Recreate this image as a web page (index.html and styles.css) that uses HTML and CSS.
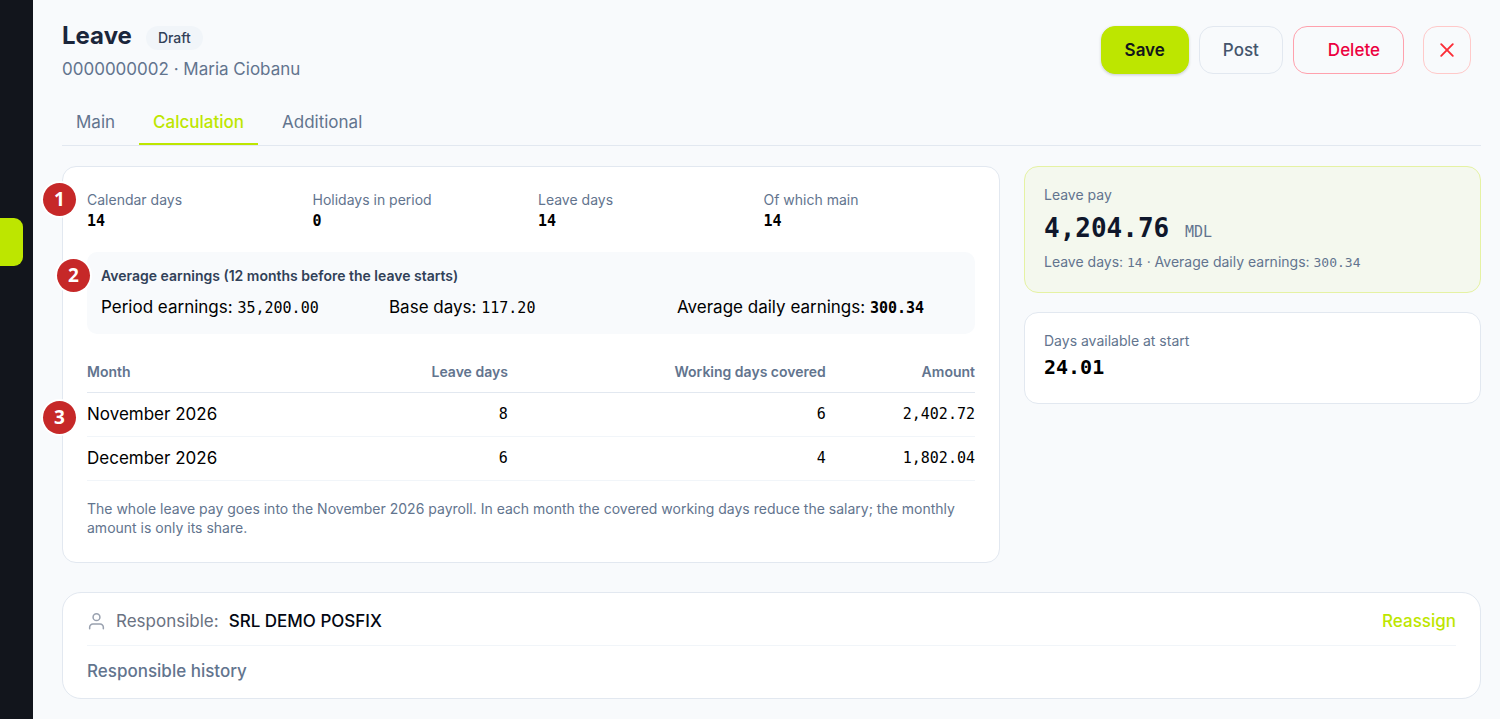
FILE: index.html
```html
<!DOCTYPE html>
<html lang="en">
<head>
<meta charset="utf-8">
<title>Leave</title>
<link rel="stylesheet" href="styles.css">
</head>
<body>
<div class="app">
  <aside class="sidebar"><a class="sidebar-active" href="#" aria-label="Leave"></a></aside>
  <main class="main">
    <header class="header">
      <div class="heading">
        <div class="title-row">
          <h1 class="title">Leave</h1>
          <span class="status">Draft</span>
        </div>
        <p class="subtitle">0000000002 · Maria Ciobanu</p>
      </div>
      <div class="actions">
        <button class="btn btn-save" type="button">Save</button>
        <button class="btn" type="button">Post</button>
        <button class="btn btn-delete" type="button">Delete</button>
        <button class="btn btn-close" type="button" aria-label="Close">
          <svg width="20" height="20" viewBox="0 0 20 20" fill="none" stroke="currentColor" stroke-width="1.9" stroke-linecap="round"><path d="M4.2 4.2l11.6 11.6M15.8 4.2L4.2 15.8"/></svg>
        </button>
      </div>
    </header>

    <nav class="tabs">
      <a class="tab" href="#">Main</a>
      <a class="tab tab-active" href="#">Calculation</a>
      <a class="tab" href="#">Additional</a>
    </nav>

    <div class="columns">
      <section class="card calc">
        <dl class="stats">
          <div class="stat"><span class="marker marker-outer">1</span><dt class="label">Calendar days</dt><dd class="stat-value">14</dd></div>
          <div class="stat"><dt class="label">Holidays in period</dt><dd class="stat-value">0</dd></div>
          <div class="stat"><dt class="label">Leave days</dt><dd class="stat-value">14</dd></div>
          <div class="stat"><dt class="label">Of which main</dt><dd class="stat-value">14</dd></div>
        </dl>

        <div class="average">
          <span class="marker marker-inner">2</span>
          <h2 class="average-title">Average earnings (12 months before the leave starts)</h2>
          <div class="average-row">
            <div>Period earnings: <span class="num">35,200.00</span></div>
            <div>Base days: <span class="num">117.20</span></div>
            <div>Average daily earnings: <span class="num num-bold">300.34</span></div>
          </div>
        </div>

        <table class="months">
          <colgroup><col class="col-month"><col class="col-leave"><col class="col-working"><col></colgroup>
          <thead>
            <tr><th>Month</th><th>Leave days</th><th>Working days covered</th><th>Amount</th></tr>
          </thead>
          <tbody>
            <tr><td><span class="marker marker-outer">3</span>November 2026</td><td>8</td><td>6</td><td>2,402.72</td></tr>
            <tr><td>December 2026</td><td>6</td><td>4</td><td>1,802.04</td></tr>
          </tbody>
        </table>

        <p class="note">The whole leave pay goes into the November 2026 payroll. In each month the covered working days reduce the salary; the monthly amount is only its share.</p>
      </section>

      <div class="side">
        <section class="card side-card pay">
          <div class="label">Leave pay</div>
          <div class="pay-value">4,204.76 <span class="currency">MDL</span></div>
          <div class="label">Leave days: <span class="num-small">14</span> · Average daily earnings: <span class="num-small">300.34</span></div>
        </section>
        <section class="card side-card">
          <div class="label">Days available at start</div>
          <div class="days-value">24.01</div>
        </section>
      </div>
    </div>

    <section class="card responsible">
      <div class="responsible-row">
        <svg class="user-icon" width="19" height="19" viewBox="0 0 20 20" fill="none" stroke="currentColor" stroke-width="1.6" stroke-linecap="round" stroke-linejoin="round"><circle cx="10" cy="5.4" r="3.6"/><path d="M2.8 17.6V16a3.4 3.4 0 0 1 3.4-3.4h7.6a3.4 3.4 0 0 1 3.4 3.4v1.6"/></svg>
        <span class="responsible-label">Responsible:</span>
        <span class="responsible-name">SRL DEMO POSFIX</span>
        <button class="reassign" type="button">Reassign</button>
      </div>
      <button class="history" type="button">Responsible history</button>
    </section>
  </main>
</div>
</body>
</html>
```
FILE: styles.css
```css
* { box-sizing: border-box; }

body {
  margin: 0;
  background: #f8fafc;
  color: #000;
  font-family: Inter, "Liberation Sans", sans-serif;
  font-size: 17px;
  line-height: 24px;
}

h1, h2, p, dl, dd { margin: 0; }
button { font: inherit; cursor: pointer; }
a { text-decoration: none; }

.app { display: flex; min-height: 100vh; }

.sidebar {
  flex: 0 0 33px;
  padding-top: 218px;
  background: #12151c;
}
.sidebar-active {
  display: block;
  width: 23px;
  height: 48px;
  border-radius: 0 9px 9px 0;
  background: #bde600;
}

.main { flex: 1; min-width: 0; padding: 19px 19px 19px 29px; }

.header { display: flex; justify-content: space-between; align-items: flex-start; padding-right: 10px; }
.title-row { display: flex; align-items: center; gap: 14px; height: 33px; }
.title { font-size: 24px; line-height: 33px; font-weight: 700; color: #1b263b; }
.status {
  margin-top: 4px;
  padding: 0 12px;
  border-radius: 12px;
  background: #f1f5f9;
  color: #314158;
  font-size: 14px;
  font-weight: 500;
}
.subtitle { margin-top: 4px; line-height: 26px; color: #62748e; }

.actions { display: flex; gap: 10px; margin-top: 7px; }
.btn {
  height: 48px;
  padding: 0 23px;
  border: 1px solid #e2e8f0;
  border-radius: 14px;
  background: transparent;
  color: #45556c;
  font-weight: 500;
}
.btn-save {
  border-color: #bde600;
  background: #bde600;
  color: #12151c;
  font-weight: 600;
  box-shadow: 0 1px 3px rgba(15, 23, 42, 0.2);
}
.btn-delete { padding-left: 34px; border-color: #ffa1ad; color: #ec003f; }
.btn-close {
  display: flex;
  align-items: center;
  justify-content: center;
  width: 48px;
  margin-left: 9px;
  padding: 0;
  border-color: #ffc9c9;
  color: #fb2c36;
}

.tabs {
  display: flex;
  gap: 10px;
  margin-top: 17px;
  border-bottom: 1px solid #e2e8f0;
}
.tab { padding: 11px 14px 9px; border-bottom: 2px solid transparent; color: #62748e; }
.tab-active { border-color: #bde600; color: #bde600; font-weight: 500; }

.columns {
  display: grid;
  grid-template-columns: repeat(3, 1fr);
  gap: 24px;
  align-items: start;
  margin-top: 20px;
}
.card { border: 1px solid #e2e8f0; border-radius: 14px; background: #fff; }
.calc { grid-column: span 2; padding: 23px 24px 25px; }
.label { color: #62748e; font-size: 14px; line-height: 20px; }

.stats { display: grid; grid-template-columns: repeat(4, 1fr); gap: 14px; }
.stat { position: relative; }
.stat-value { font: 700 15px/22px "DejaVu Sans Mono", monospace; }

.marker {
  position: absolute;
  display: flex;
  align-items: center;
  justify-content: center;
  width: 33px;
  height: 33px;
  border-radius: 50%;
  background: #c62828;
  box-shadow: 0 0 0 2px #fff;
  color: #fff;
  font: 700 19px/33px "Open Sans", "Noto Sans", sans-serif;
}
.marker-outer { left: -44px; top: 8px; }
.stat .marker-outer { top: -7px; }
.marker-inner { left: -30px; top: 7px; }

.average {
  position: relative;
  margin-top: 20px;
  padding: 14px;
  border-radius: 10px;
  background: #f8fafc;
}
.average-title { color: #314158; font-size: 14px; line-height: 19px; font-weight: 600; }
.average-row { display: grid; grid-template-columns: repeat(3, 1fr); gap: 4px; margin-top: 10px; }
.num, .months td + td { font-family: "DejaVu Sans Mono", monospace; font-size: 15px; }
.num-bold { font-weight: 700; }
.num-small { font-family: "DejaVu Sans Mono", monospace; font-size: 13px; }

.months { width: 100%; margin-top: 19px; border-collapse: separate; border-spacing: 0; table-layout: fixed; }
.col-month { width: 24%; }
.col-leave { width: 23.4%; }
.col-working { width: 35.8%; }
.months th {
  padding: 9px 0 11px;
  border-bottom: 1px solid #e2e8f0;
  color: #62748e;
  font-size: 14px;
  line-height: 19px;
  font-weight: 600;
  text-align: left;
}
.months td { position: relative; padding: 10px 0; border-bottom: 1px solid #f1f5f9; line-height: 23px; }
.months th + th, .months td + td { text-align: right; }

.note { margin-top: 18px; color: #62748e; font-size: 14px; line-height: 19px; }

.side { display: grid; gap: 19px; }
.side-card { padding: 18px 19px 19px; }
.pay { border-color: #e5f2a3; background: #f4f8ee; }
.pay-value { color: #0f172b; font: 700 26px/47px "DejaVu Sans Mono", monospace; }
.currency { color: #62748e; font-size: 15px; line-height: 20px; font-weight: 400; }
.days-value { font: 700 20px/33px "DejaVu Sans Mono", monospace; }

.responsible { margin-top: 29px; padding: 14px 24px; border-radius: 19px; }
.responsible-row {
  display: flex;
  align-items: center;
  gap: 10px;
  padding-bottom: 10px;
  border-bottom: 1px solid #f1f5f9;
  line-height: 28px;
}
.user-icon { color: #99a1af; }
.responsible-label { color: #6a7282; }
.responsible-name { color: #030712; font-weight: 500; }
.reassign, .history { padding: 0; border: 0; background: none; font-weight: 500; }
.reassign { margin-left: auto; color: #bde600; }
.history { display: block; margin-top: 12px; line-height: 26px; color: #62748e; }
```
